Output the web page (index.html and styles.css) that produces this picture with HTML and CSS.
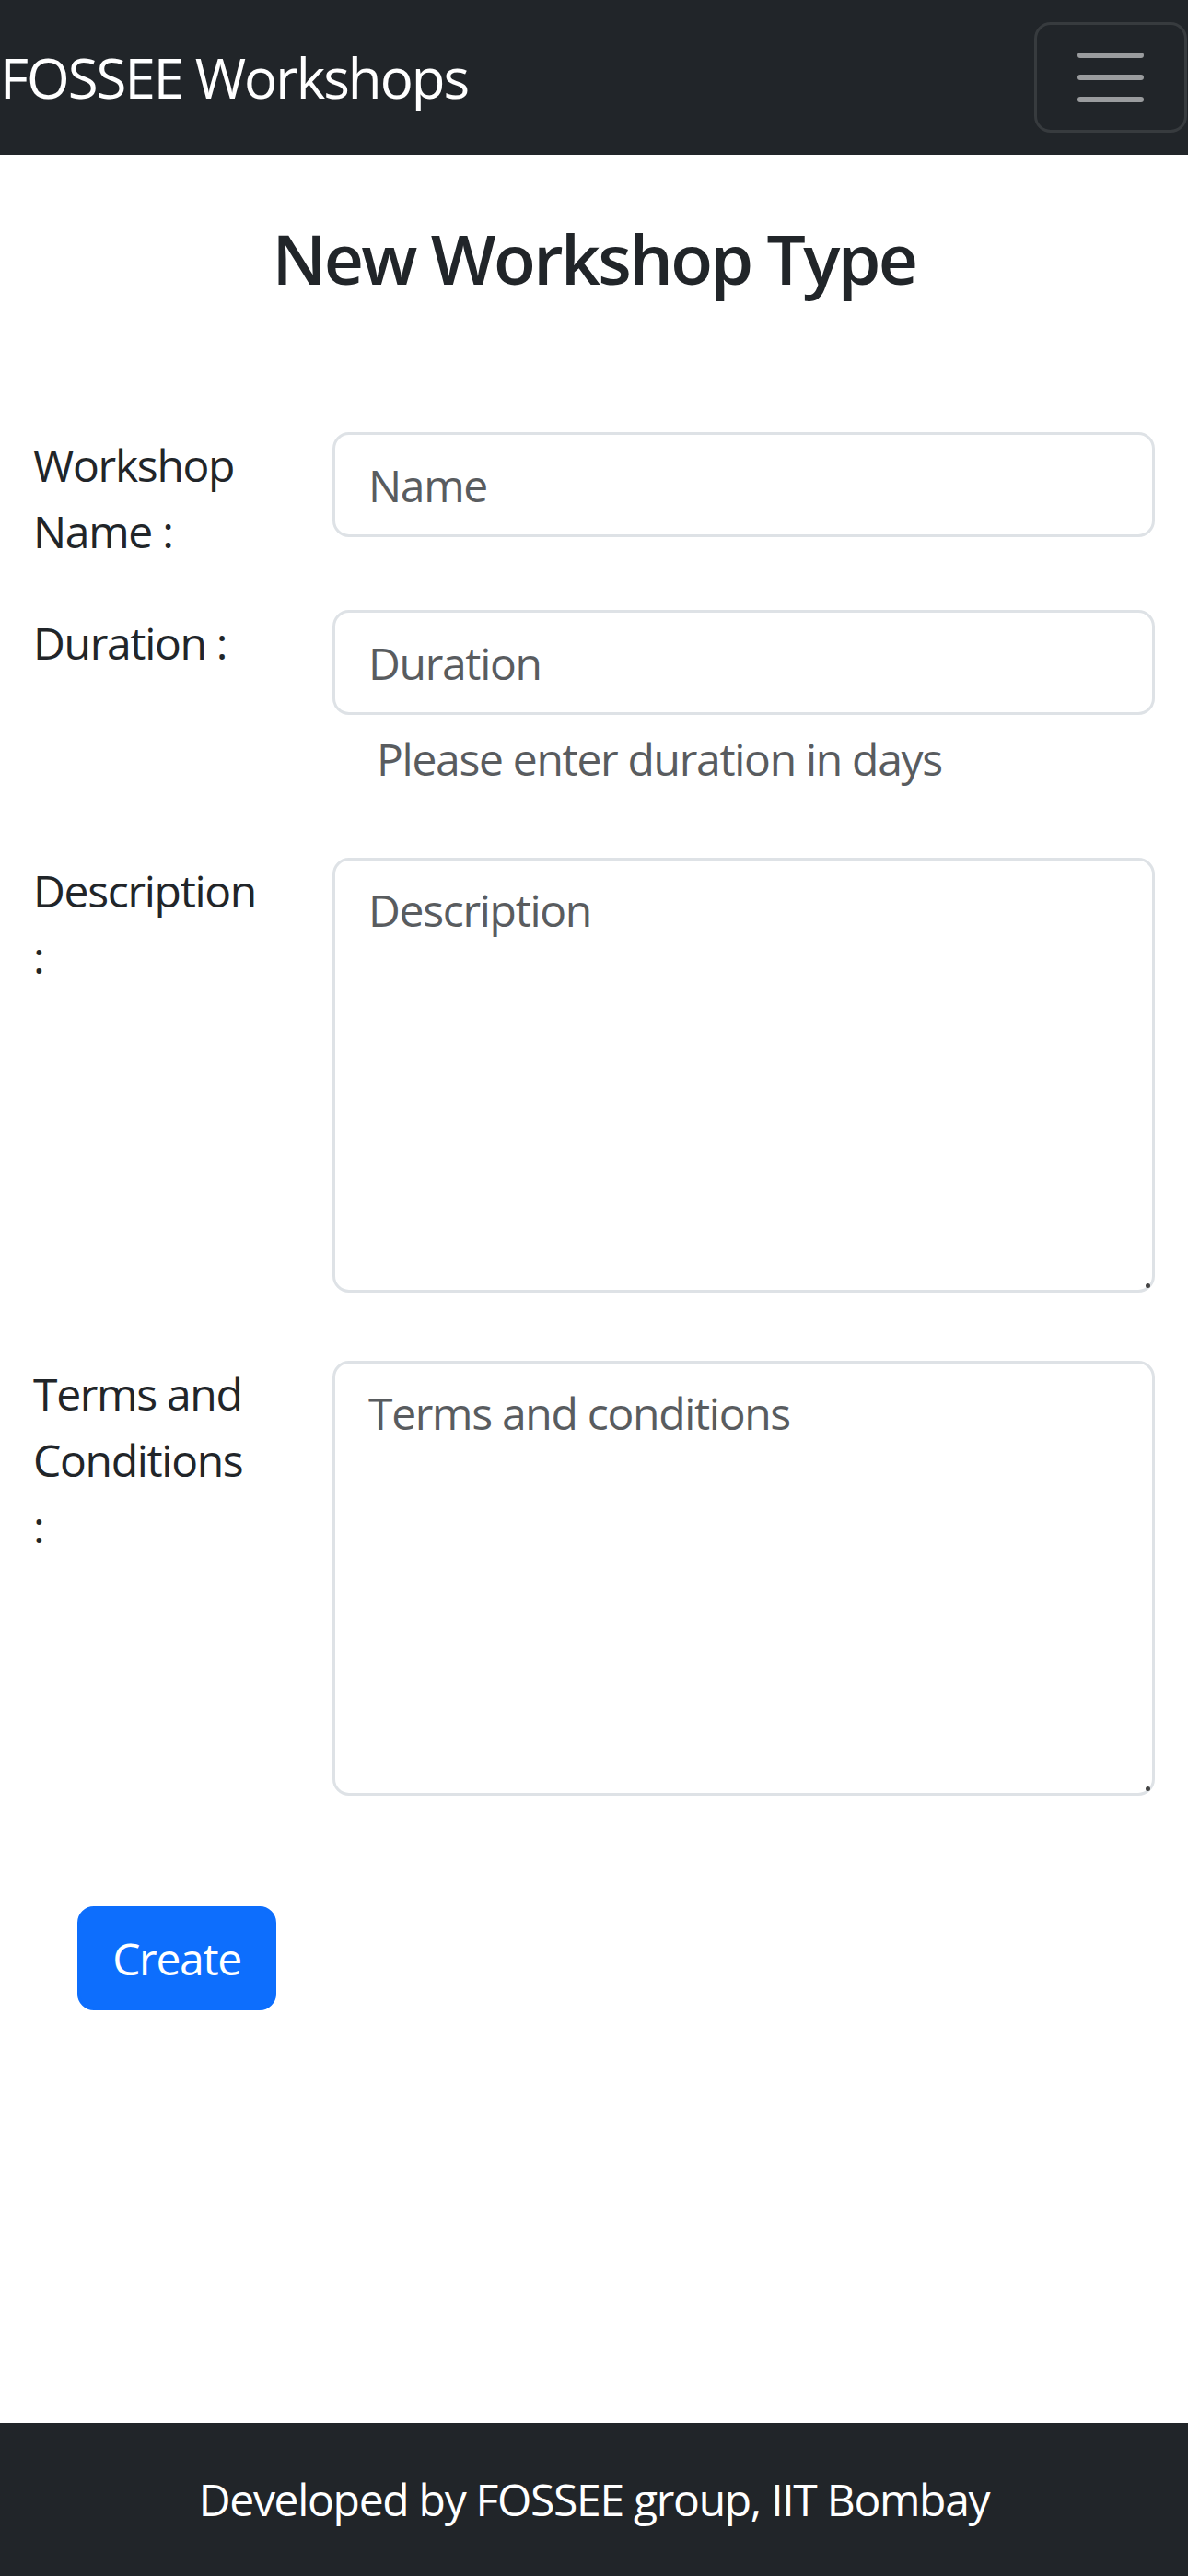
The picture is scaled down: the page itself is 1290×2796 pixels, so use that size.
FILE: index.html
```html
<!DOCTYPE html>
<html lang="en">
<head>
<meta charset="utf-8">
<title>New Workshop Type</title>
<link rel="stylesheet" href="styles.css">
</head>
<body>
<nav class="navbar">
  <a class="brand" href="#">FOSSEE Workshops</a>
  <button class="toggler" type="button" aria-label="Toggle navigation">
    <svg class="toggler-icon" viewBox="0 0 30 30" width="90" height="90"><path d="M4 7h22M4 15h22M4 23h22" stroke="rgba(255,255,255,0.55)" stroke-width="2" stroke-linecap="round" stroke-miterlimit="10" fill="none"/></svg>
  </button>
</nav>
<main class="container">
  <h2 class="title">New Workshop Type</h2>
  <form class="form">
    <div class="row row-first">
      <label class="label" for="name">Workshop Name :</label>
      <div class="field"><input class="control" id="name" type="text" placeholder="Name"></div>
    </div>
    <div class="row row-help">
      <label class="label" for="duration">Duration :</label>
      <div class="field">
        <input class="control" id="duration" type="text" placeholder="Duration">
        <div class="help">Please enter duration in days</div>
      </div>
    </div>
    <div class="row row-area">
      <label class="label" for="description">Description :</label>
      <div class="field area-wrap">
        <textarea class="control area" id="description" placeholder="Description"></textarea>
        <span class="grip"></span>
      </div>
    </div>
    <div class="row row-last">
      <label class="label" for="terms">Terms and Conditions :</label>
      <div class="field area-wrap">
        <textarea class="control area" id="terms" placeholder="Terms and conditions"></textarea>
        <span class="grip"></span>
      </div>
    </div>
    <button class="btn" type="button">Create</button>
  </form>
</main>
<footer class="footer">Developed by FOSSEE group, IIT Bombay</footer>
</body>
</html>
```

FILE: styles.css
```css
* { box-sizing: border-box; }

html, body {
  margin: 0;
  padding: 0;
}

body {
  min-height: 2796px;
  display: flex;
  flex-direction: column;
  font-family: "Open Sans", "Noto Sans", sans-serif;
  font-size: 48px;
  line-height: 72px;
  letter-spacing: -1.3px;
  color: #212529;
  background: #fff;
}

.navbar {
  height: 168px;
  background: #212529;
  display: flex;
  align-items: center;
  justify-content: space-between;
  padding: 0 1px 0 0;
}

.brand {
  color: #fff;
  text-decoration: none;
  font-size: 60px;
  line-height: 90px;
  letter-spacing: -2px;
  padding: 15px 0;
  white-space: nowrap;
}

.toggler {
  width: 166px;
  height: 120px;
  padding: 0;
  display: flex;
  align-items: center;
  justify-content: center;
  background: transparent;
  border: 3px solid rgba(255, 255, 255, 0.1);
  border-radius: 18px;
}

.toggler-icon { display: block; }

.container {
  padding: 0 36px;
}

.title {
  margin: 67px 0 0;
  text-align: center;
  font-size: 75px;
  line-height: 90px;
  font-weight: 600;
  letter-spacing: -2.6px;
  color: #212529;
}

.form {
  margin-top: 144px;
}

.row {
  display: grid;
  grid-template-columns: 250px 1fr;
  column-gap: 75px;
  align-items: start;
}

.row-first { margin-bottom: 49px; }
.row-help { margin-bottom: 71px; }
.row-area { margin-bottom: 74px; }
.row-last { margin-bottom: 120px; }

.label {
  display: block;
  padding-right: 16px;
  color: #212529;
}

.field { min-width: 0; }

.control {
  display: block;
  width: 100%;
  height: 114px;
  margin: 0;
  padding: 18px 36px;
  font-family: inherit;
  font-size: 48px;
  line-height: 72px;
  letter-spacing: -1.3px;
  color: #212529;
  background: #fff;
  border: 3px solid #dee2e6;
  border-radius: 18px;
  outline: none;
}

.control::placeholder {
  color: #595c5f;
  opacity: 1;
}

.area {
  height: 472px;
  resize: none;
}

.area-wrap { position: relative; }

.grip {
  position: absolute;
  right: 5px;
  bottom: 5px;
  width: 5px;
  height: 5px;
  border-radius: 50%;
  background: #444;
}

.help {
  margin: 12px 0 0 48px;
  color: #595c5f;
}

.btn {
  display: block;
  margin-left: 48px;
  width: 216px;
  height: 113px;
  padding: 0;
  font-family: inherit;
  font-size: 48px;
  line-height: 72px;
  letter-spacing: -1.3px;
  color: #fff;
  background: #0d6efd;
  border: 3px solid #0d6efd;
  border-radius: 18px;
}

.footer {
  margin-top: auto;
  height: 166px;
  background: #212529;
  color: #fff;
  text-align: center;
  padding: 47px 0;
}
```
